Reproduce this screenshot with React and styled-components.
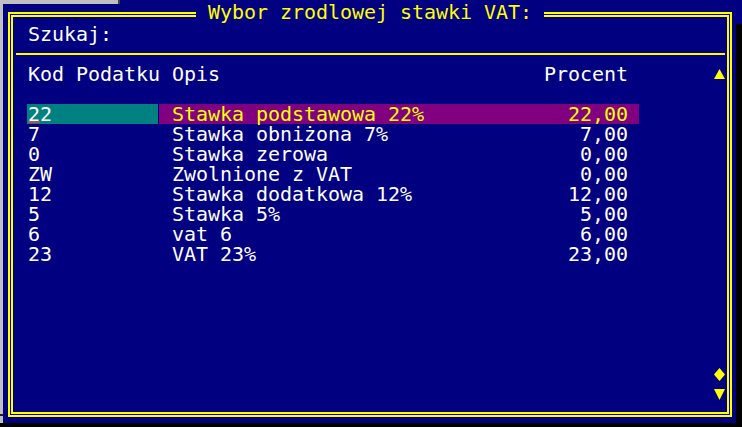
import React from "react";
import styled, { createGlobalStyle } from "styled-components";

const NAVY = "#000080";
const YELLOW = "#ffff00";
const TEAL = "#008080";
const PURPLE = "#800080";

const Global = createGlobalStyle`
  html, body { margin: 0; padding: 0; background: #000; }
  body { font-family: "DejaVu Sans Mono", "Liberation Mono", monospace; }
`;

const Screen = styled.div`
  position: relative;
  width: 742px;
  height: 427px;
  overflow: hidden;
  background: linear-gradient(to bottom, ${NAVY} 0 24px, #000 24px 100%);
`;

const Console = styled.div`
  width: 736px;
  height: 423px;
  box-sizing: border-box;
  padding: 12px 0 0 8px;
  background: ${NAVY};
  font-family: "DejaVu Sans Mono", "Liberation Mono", monospace;
  font-size: 20px;
  letter-spacing: -0.04px;
  line-height: 20px;
  color: #fff;
`;

const BackWindow = styled.div`
  position: absolute;
  left: 0;
  top: 0;
  width: ${(p) => p.$w}px;
  height: ${(p) => p.$h}px;
  background: #c0c0c0;
  border-right: ${(p) => (p.$edge ? "2px solid #404040" : "none")};
`;

const Tick = styled.div`
  position: absolute;
  left: 0;
  top: ${(p) => p.$y}px;
  width: ${(p) => p.$w}px;
  height: ${(p) => p.$h}px;
  background: #202020;
`;

const Frame = styled.div`
  position: relative;
  width: 724px;
  height: 405px;
  box-sizing: border-box;
  border: 2px solid ${YELLOW};
  padding: 1px;
`;

const Inner = styled.div`
  height: 100%;
  box-sizing: border-box;
  border: 2px solid ${YELLOW};
  display: flex;
  flex-direction: column;
  padding: 7px 2px 0 3px;
`;

const Title = styled.div`
  position: absolute;
  top: -12px;
  left: 186px;
  height: 20px;
  background: ${NAVY};
  color: ${YELLOW};
  white-space: pre;
`;

const Search = styled.div`
  height: 20px;
  padding-left: 12px;
  white-space: pre;
`;

const Separator = styled.div`
  height: 2px;
  margin: 9px 0 9px;
  background: ${YELLOW};
`;

const Body = styled.div`
  display: flex;
  height: 340px;
`;

const List = styled.div`
  display: flex;
  flex-direction: column;
  margin-left: 11px;
`;

const Row = styled.div`
  display: grid;
  grid-template-columns: 131px 480px;
  column-gap: 1px;
  height: 20px;
  white-space: pre;
  color: ${(p) => (p.$selected ? YELLOW : "#fff")};
  margin-bottom: ${(p) => (p.$gapAfter ? 20 : 0)}px;
`;

const KodCell = styled.div`
  position: relative;
  padding-left: 1px;
  background: ${(p) => (p.$selected ? TEAL : "transparent")};
  color: ${(p) => (p.$selected ? "#fff" : "inherit")};
`;

const Cursor = styled.div`
  position: absolute;
  left: 1px;
  top: 17px;
  width: 12px;
  height: 2px;
  background: #c04848;
`;

const DescCell = styled.div`
  display: flex;
  justify-content: space-between;
  padding: 0 11px 0 13px;
  background: ${(p) => (p.$selected ? PURPLE : "transparent")};
`;

const ScrollCol = styled.div`
  margin-left: auto;
  width: 12px;
  display: flex;
  flex-direction: column;
`;

const ScrollCell = styled.div`
  height: 20px;
  display: flex;
  align-items: center;
  justify-content: center;
  margin-top: ${(p) => (p.$push ? "auto" : "0")};
`;

const rows = [
  ["22", "Stawka podstawowa 22%", "22,00"],
  ["7", "Stawka obniżona 7%", "7,00"],
  ["0", "Stawka zerowa", "0,00"],
  ["ZW", "Zwolnione z VAT", "0,00"],
  ["12", "Stawka dodatkowa 12%", "12,00"],
  ["5", "Stawka 5%", "5,00"],
  ["6", "vat 6", "6,00"],
  ["23", "VAT 23%", "23,00"],
];

const UpArrow = () => (
  <svg width="11" height="10" viewBox="0 0 11 10">
    <polygon points="5.5,0 11,10 0,10" fill={YELLOW} />
  </svg>
);

const Diamond = () => (
  <svg width="11" height="13" viewBox="0 0 11 13">
    <polygon points="5.5,0 11,6.5 5.5,13 0,6.5" fill={YELLOW} />
  </svg>
);

const DownArrow = () => (
  <svg width="11" height="11" viewBox="0 0 11 11">
    <polygon points="0,0 11,0 5.5,11" fill={YELLOW} />
  </svg>
);

export default function App() {
  return (
    <>
      <Global />
      <Screen>
        <Console>
          <Frame>
            <Title>{" Wybor zrodlowej stawki VAT: "}</Title>
            <Inner>
              <Search>Szukaj:</Search>
              <Separator />
              <Body>
                <List>
                  <Row $gapAfter>
                    <KodCell>Kod Podatku</KodCell>
                    <DescCell>
                      <span>Opis</span>
                      <span>Procent</span>
                    </DescCell>
                  </Row>
                  {rows.map(([kod, opis, pct], i) => (
                    <Row key={kod} $selected={i === 0}>
                      <KodCell $selected={i === 0}>
                        {kod}
                        {i === 0 && <Cursor />}
                      </KodCell>
                      <DescCell $selected={i === 0}>
                        <span>{opis}</span>
                        <span>{pct}</span>
                      </DescCell>
                    </Row>
                  ))}
                </List>
                <ScrollCol>
                  <ScrollCell>
                    <UpArrow />
                  </ScrollCell>
                  <ScrollCell $push>
                    <Diamond />
                  </ScrollCell>
                  <ScrollCell>
                    <DownArrow />
                  </ScrollCell>
                </ScrollCol>
              </Body>
            </Inner>
          </Frame>
        </Console>
        <BackWindow $w={3} $h={423} />
        <BackWindow $w={118} $h={4} $edge />
        <Tick $y={414} $w={3} $h={2} />
      </Screen>
    </>
  );
}
